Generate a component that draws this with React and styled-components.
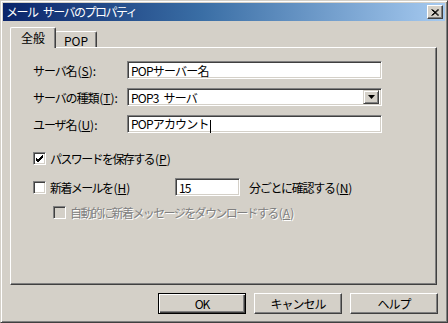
import React from "react";
import styled, { createGlobalStyle } from "styled-components";

const Global = createGlobalStyle`
  html, body { margin: 0; padding: 0; background: #d4d0c8; }
  body { font-family: "Noto Sans CJK JP", "DejaVu Sans", sans-serif; font-size: 12px; color: #000; }
  * { box-sizing: border-box; }
`;

const Window = styled.div`
  width: 448px;
  height: 323px;
  background: #d4d0c8;
  padding: 3px;
  border: 1px solid;
  border-color: #d4d0c8 #404040 #404040 #d4d0c8;
  box-shadow: inset 1px 1px #ffffff, inset -1px -1px #808080;
  display: flex;
  flex-direction: column;
`;

const TitleBar = styled.div`
  height: 18px;
  margin: -1px -1px 0 -1px;
  background: linear-gradient(to right, #0a246a, #3a6ea5 45%, #a6caf0);
  display: flex;
  align-items: center;
  justify-content: space-between;
  padding: 0 2px 0 3px;
`;

const TitleText = styled.span`
  color: #fff;
  font-size: 12px;
  line-height: 18px;
  letter-spacing: -1.5px;
  word-spacing: 4px;
  white-space: pre;
`;

const CloseBtn = styled.div`
  width: 16px;
  height: 14px;
  background: #d4d0c8;
  border: 1px solid;
  border-color: #fff #404040 #404040 #fff;
  box-shadow: inset -1px -1px #808080;
  display: flex;
  align-items: center;
  justify-content: center;
`;

const Body = styled.div`
  padding: 6px 7px 0 6px;
  display: flex;
  flex-direction: column;
`;

const TabRow = styled.div`
  display: flex;
  align-items: flex-end;
  height: 21px;
  margin-bottom: -1px;
`;

const Tab = styled.div`
  position: relative;
  z-index: ${(p) => (p.$active ? 2 : 0)};
  width: ${(p) => p.$w}px;
  height: ${(p) => (p.$active ? 21 : 17)}px;
  margin-right: ${(p) => (p.$active ? -1 : 0)}px;
  background: #d4d0c8;
  border-top: 1px solid #fff;
  border-left: 1px solid #fff;
  border-right: 1px solid #404040;
  box-shadow: inset -1px 0 #808080;
  border-radius: 2px 2px 0 0;
  display: flex;
  align-items: center;
  justify-content: center;
  padding-bottom: ${(p) => (p.$active ? 1 : 0)}px;
  font-size: 12px;
`;

const Panel = styled.div`
  position: relative;
  z-index: 1;
  width: 427px;
  height: 238px;
  border: 1px solid;
  border-color: #fff #404040 #404040 #fff;
  box-shadow: inset -1px -1px #808080;
  padding: 13px 0 0 22px;
  display: flex;
  flex-direction: column;
`;

const FormGrid = styled.div`
  display: grid;
  grid-template-columns: 94px 255px;
  grid-auto-rows: 18px;
  row-gap: 9px;
  align-items: center;
`;

const Label = styled.span`
  font-size: 12px;
  white-space: nowrap;
  letter-spacing: ${(p) => (p.$tight ? -1.6 : -1.1)}px;
  color: ${(p) => (p.$disabled ? "#808080" : "#000")};
  text-shadow: ${(p) => (p.$disabled ? "1px 1px #fff" : "none")};
`;

const Mn = styled.span`
  letter-spacing: 0;
  margin-left: 1px;
`;

const Field = styled.div`
  height: ${(p) => p.$h || 18}px;
  width: ${(p) => (p.$w ? p.$w + "px" : "100%")};
  background: #fff;
  border: 1px solid;
  border-color: #808080 #fff #fff #808080;
  box-shadow: inset 1px 1px #404040, inset -1px -1px #d4d0c8;
  display: flex;
  align-items: center;
  padding: 0 2px 0 3px;
  font-size: 12px;
  white-space: pre;
`;

const FieldText = styled.span`
  flex: 1;
  letter-spacing: -0.8px;
  word-spacing: 3px;
`;

const Caret = styled.span`
  display: inline-block;
  width: 1px;
  height: 13px;
  background: #000;
  vertical-align: middle;
  margin-left: 1px;
`;

const DropBtn = styled.div`
  width: 16px;
  height: 14px;
  background: #d4d0c8;
  border: 1px solid;
  border-color: #d4d0c8 #404040 #404040 #d4d0c8;
  box-shadow: inset 1px 1px #fff, inset -1px -1px #808080;
  display: flex;
  align-items: center;
  justify-content: center;
`;

const CheckRow = styled.div`
  display: flex;
  align-items: center;
  height: 18px;
  margin-top: ${(p) => p.$mt}px;
  padding-left: ${(p) => p.$indent || 0}px;
`;

const Box = styled.div`
  width: 13px;
  height: 13px;
  flex: none;
  background: ${(p) => (p.$disabled ? "#d4d0c8" : "#fff")};
  border: 1px solid;
  border-color: #808080 #fff #fff #808080;
  box-shadow: inset 1px 1px #404040, inset -1px -1px #d4d0c8;
  display: flex;
  align-items: center;
  justify-content: center;
  margin-right: 4px;
`;

const LabelCell = styled.div`
  display: flex;
  align-items: center;
  width: ${(p) => p.$w}px;
`;

const After = styled.span`
  margin-left: 9px;
  font-size: 12px;
  letter-spacing: -1.3px;
`;

const ButtonRow = styled.div`
  display: flex;
  justify-content: flex-end;
  gap: 8px;
  margin-top: 8px;
  margin-right: -1px;
`;

const Button = styled.div`
  width: 88px;
  height: 21px;
  background: #d4d0c8;
  border: 1px solid;
  border-color: ${(p) => (p.$default ? "#000" : "#fff #404040 #404040 #fff")};
  box-shadow: ${(p) =>
    p.$default
      ? "inset 1px 1px #fff, inset -1px -1px #404040, inset -2px -2px #808080"
      : "inset -1px -1px #808080"};
  display: flex;
  align-items: center;
  justify-content: center;
  font-size: 12px;
  letter-spacing: -1px;
`;

const Check = () => (
  <svg width="9" height="9" viewBox="0 0 9 9">
    <path d="M1 4 L3 6 L8 1 M1 5 L3 7 L8 2 M1 6 L3 8 L8 3" stroke="#000" strokeWidth="1" fill="none" />
  </svg>
);

export default function App() {
  return (
    <>
      <Global />
      <Window>
        <TitleBar>
          <TitleText>メール サーバのプロパティ</TitleText>
          <CloseBtn>
            <svg width="8" height="7" viewBox="0 0 8 7">
              <path d="M0.5 0.5 L7 6.5 M1.5 0.5 L8 6.5 M7 0.5 L0.5 6.5 M8 0.5 L1.5 6.5" stroke="#000" strokeWidth="1" />
            </svg>
          </CloseBtn>
        </TitleBar>
        <Body>
          <TabRow>
            <Tab $active $w={46}>全般</Tab>
            <Tab $w={42}>POP</Tab>
          </TabRow>
          <Panel>
            <FormGrid>
              <Label>サーバ名<Mn>(<u>S</u>):</Mn></Label>
              <Field>
                <FieldText>POPサーバー名</FieldText>
              </Field>
              <Label>サーバの種類<Mn>(<u>T</u>):</Mn></Label>
              <Field>
                <FieldText>POP3 サーバ</FieldText>
                <DropBtn>
                  <svg width="7" height="4" viewBox="0 0 7 4">
                    <path d="M0 0 H7 L3.5 4 Z" fill="#000" />
                  </svg>
                </DropBtn>
              </Field>
              <Label>ユーザ名<Mn>(<u>U</u>):</Mn></Label>
              <Field>
                <FieldText>
                  POPアカウント<Caret />
                </FieldText>
              </Field>
            </FormGrid>
            <CheckRow $mt={16}>
              <Box>
                <Check />
              </Box>
              <Label $tight>パスワードを保存する<Mn>(<u>P</u>)</Mn></Label>
            </CheckRow>
            <CheckRow $mt={11}>
              <LabelCell $w={142}>
                <Box />
                <Label $tight>新着メールを<Mn>(<u>H</u>)</Mn></Label>
              </LabelCell>
              <Field $w={65}>
                <FieldText>15</FieldText>
              </Field>
              <After>分ごとに確認する<Mn>(<u>N</u>)</Mn></After>
            </CheckRow>
            <CheckRow $mt={7} $indent={20}>
              <Box $disabled />
              <Label $disabled $tight>自動的に新着メッセージをダウンロードする<Mn>(<u>A</u>)</Mn></Label>
            </CheckRow>
          </Panel>
          <ButtonRow>
            <Button $default>OK</Button>
            <Button>キャンセル</Button>
            <Button>ヘルプ</Button>
          </ButtonRow>
        </Body>
      </Window>
    </>
  );
}
